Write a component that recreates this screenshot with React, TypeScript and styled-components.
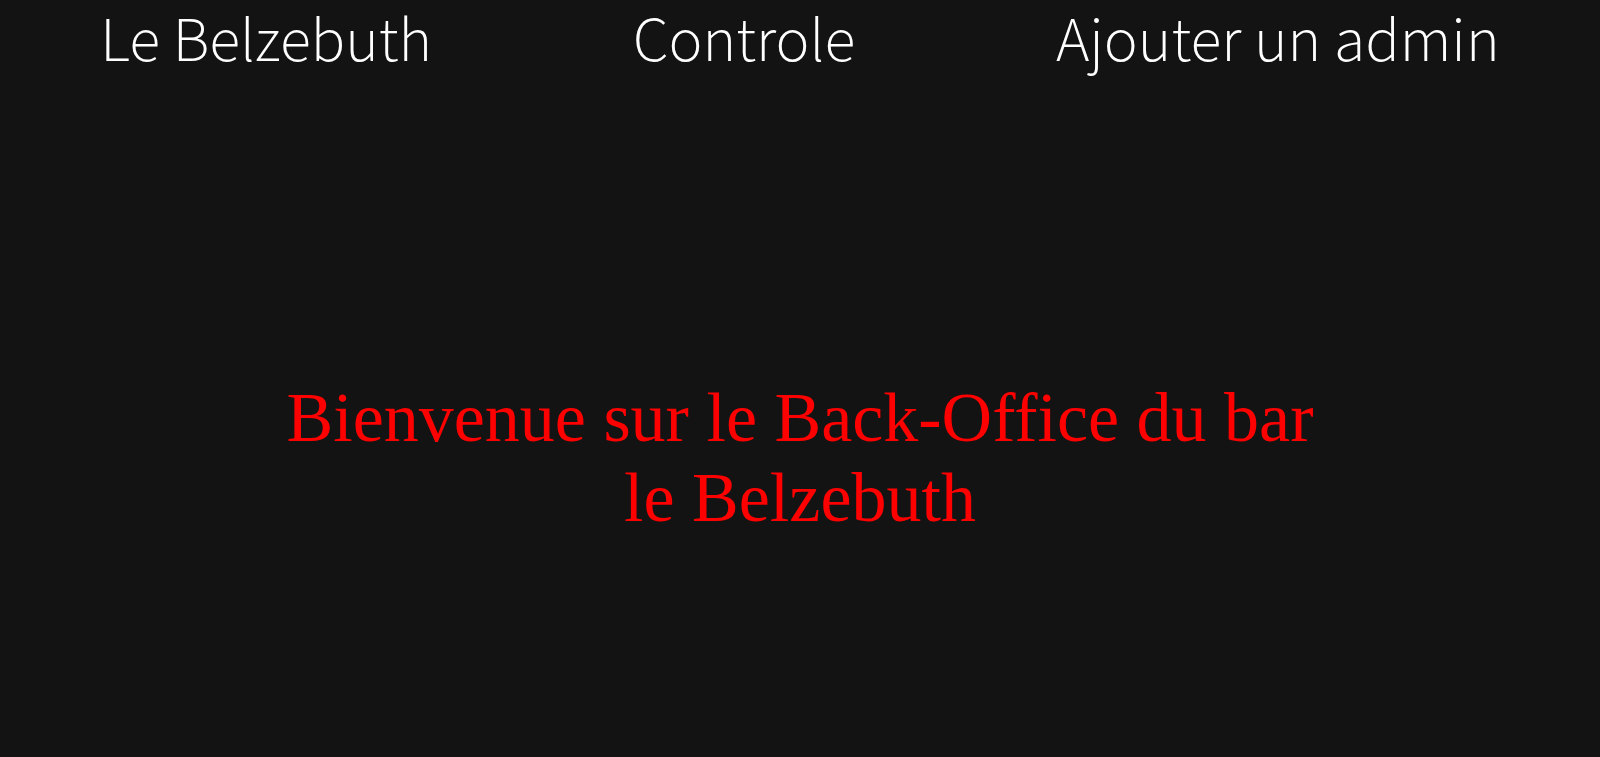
import React from "react";
import styled, { createGlobalStyle } from "styled-components";

const Global = createGlobalStyle`
  html, body {
    margin: 0;
    padding: 0;
    background: #131313;
  }
  #root {
    min-height: 100vh;
  }
`;

const Page = styled.div`
  min-height: 100vh;
  display: flex;
  flex-direction: column;
  background: #131313;
`;

const Nav = styled.nav`
  display: flex;
  justify-content: space-around;
  align-items: center;
  height: 81px;
`;

const NavLink = styled.a`
  font-family: "Source Sans Pro", "Source Sans 3", Lato, "Open Sans", sans-serif;
  font-weight: 300;
  font-size: 63.5px;
  color: #ffffff;
  text-decoration: none;
  line-height: normal;
  cursor: pointer;
`;

const Main = styled.main`
  flex: 1;
  display: flex;
  align-items: center;
  justify-content: center;
  padding: 78px 275px 0 275px;
`;

const Title = styled.h1`
  margin: 0;
  font-family: "Liberation Serif", "Times New Roman", serif;
  font-weight: 400;
  font-size: 70px;
  line-height: normal;
  color: #ff0000;
  text-align: center;
`;

export default function App() {
  return (
    <>
      <Global />
      <Page>
        <Nav>
          <NavLink>Le Belzebuth</NavLink>
          <NavLink>Controle</NavLink>
          <NavLink>Ajouter un admin</NavLink>
        </Nav>
        <Main>
          <Title>
            Bienvenue sur le Back-Office du bar le Belzebuth
          </Title>
        </Main>
      </Page>
    </>
  );
}
